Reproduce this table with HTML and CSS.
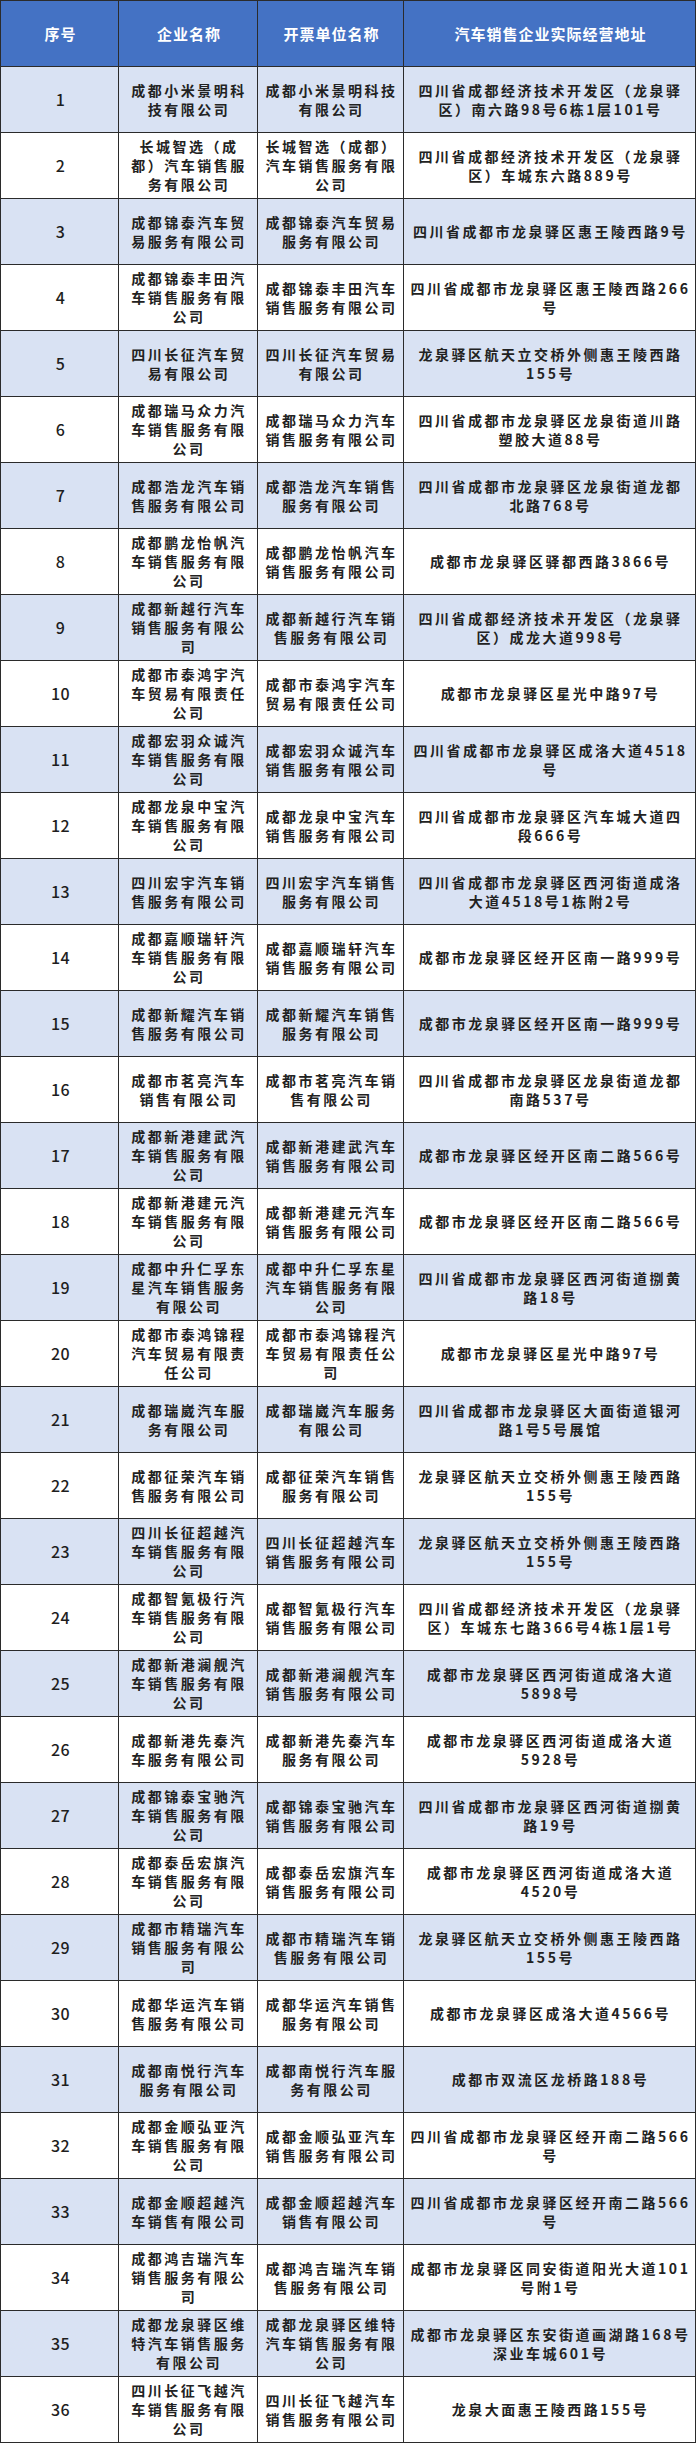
FILE: index.html
```html
<!DOCTYPE html>
<html lang="zh-CN">
<head>
<meta charset="utf-8">
<title>汽车销售企业名单</title>
<link rel="stylesheet" href="styles.css">
</head>
<body>
<div class="sheet">
  <div class="row head"><div class="cell">序号</div><div class="cell">企业名称</div><div class="cell">开票单位名称</div><div class="cell">汽车销售企业实际经营地址</div></div>
  <div class="row odd"><div class="cell num">1</div><div class="cell">成都小米景明科<br>技有限公司</div><div class="cell">成都小米景明科技<br>有限公司</div><div class="cell">四川省成都经济技术开发区（龙泉驿<br>区）南六路98号6栋1层101号</div></div>
  <div class="row"><div class="cell num">2</div><div class="cell">长城智选（成<br>都）汽车销售服<br>务有限公司</div><div class="cell">长城智选（成都）<br>汽车销售服务有限<br>公司</div><div class="cell">四川省成都经济技术开发区（龙泉驿<br>区）车城东六路889号</div></div>
  <div class="row odd"><div class="cell num">3</div><div class="cell">成都锦泰汽车贸<br>易服务有限公司</div><div class="cell">成都锦泰汽车贸易<br>服务有限公司</div><div class="cell">四川省成都市龙泉驿区惠王陵西路9号</div></div>
  <div class="row"><div class="cell num">4</div><div class="cell">成都锦泰丰田汽<br>车销售服务有限<br>公司</div><div class="cell">成都锦泰丰田汽车<br>销售服务有限公司</div><div class="cell">四川省成都市龙泉驿区惠王陵西路266<br>号</div></div>
  <div class="row odd"><div class="cell num">5</div><div class="cell">四川长征汽车贸<br>易有限公司</div><div class="cell">四川长征汽车贸易<br>有限公司</div><div class="cell">龙泉驿区航天立交桥外侧惠王陵西路<br>155号</div></div>
  <div class="row"><div class="cell num">6</div><div class="cell">成都瑞马众力汽<br>车销售服务有限<br>公司</div><div class="cell">成都瑞马众力汽车<br>销售服务有限公司</div><div class="cell">四川省成都市龙泉驿区龙泉街道川路<br>塑胶大道88号</div></div>
  <div class="row odd"><div class="cell num">7</div><div class="cell">成都浩龙汽车销<br>售服务有限公司</div><div class="cell">成都浩龙汽车销售<br>服务有限公司</div><div class="cell">四川省成都市龙泉驿区龙泉街道龙都<br>北路768号</div></div>
  <div class="row"><div class="cell num">8</div><div class="cell">成都鹏龙怡帆汽<br>车销售服务有限<br>公司</div><div class="cell">成都鹏龙怡帆汽车<br>销售服务有限公司</div><div class="cell">成都市龙泉驿区驿都西路3866号</div></div>
  <div class="row odd"><div class="cell num">9</div><div class="cell">成都新越行汽车<br>销售服务有限公<br>司</div><div class="cell">成都新越行汽车销<br>售服务有限公司</div><div class="cell">四川省成都经济技术开发区（龙泉驿<br>区）成龙大道998号</div></div>
  <div class="row"><div class="cell num">10</div><div class="cell">成都市泰鸿宇汽<br>车贸易有限责任<br>公司</div><div class="cell">成都市泰鸿宇汽车<br>贸易有限责任公司</div><div class="cell">成都市龙泉驿区星光中路97号</div></div>
  <div class="row odd"><div class="cell num">11</div><div class="cell">成都宏羽众诚汽<br>车销售服务有限<br>公司</div><div class="cell">成都宏羽众诚汽车<br>销售服务有限公司</div><div class="cell">四川省成都市龙泉驿区成洛大道4518<br>号</div></div>
  <div class="row"><div class="cell num">12</div><div class="cell">成都龙泉中宝汽<br>车销售服务有限<br>公司</div><div class="cell">成都龙泉中宝汽车<br>销售服务有限公司</div><div class="cell">四川省成都市龙泉驿区汽车城大道四<br>段666号</div></div>
  <div class="row odd"><div class="cell num">13</div><div class="cell">四川宏宇汽车销<br>售服务有限公司</div><div class="cell">四川宏宇汽车销售<br>服务有限公司</div><div class="cell">四川省成都市龙泉驿区西河街道成洛<br>大道4518号1栋附2号</div></div>
  <div class="row"><div class="cell num">14</div><div class="cell">成都嘉顺瑞轩汽<br>车销售服务有限<br>公司</div><div class="cell">成都嘉顺瑞轩汽车<br>销售服务有限公司</div><div class="cell">成都市龙泉驿区经开区南一路999号</div></div>
  <div class="row odd"><div class="cell num">15</div><div class="cell">成都新耀汽车销<br>售服务有限公司</div><div class="cell">成都新耀汽车销售<br>服务有限公司</div><div class="cell">成都市龙泉驿区经开区南一路999号</div></div>
  <div class="row"><div class="cell num">16</div><div class="cell">成都市茗亮汽车<br>销售有限公司</div><div class="cell">成都市茗亮汽车销<br>售有限公司</div><div class="cell">四川省成都市龙泉驿区龙泉街道龙都<br>南路537号</div></div>
  <div class="row odd"><div class="cell num">17</div><div class="cell">成都新港建武汽<br>车销售服务有限<br>公司</div><div class="cell">成都新港建武汽车<br>销售服务有限公司</div><div class="cell">成都市龙泉驿区经开区南二路566号</div></div>
  <div class="row"><div class="cell num">18</div><div class="cell">成都新港建元汽<br>车销售服务有限<br>公司</div><div class="cell">成都新港建元汽车<br>销售服务有限公司</div><div class="cell">成都市龙泉驿区经开区南二路566号</div></div>
  <div class="row odd"><div class="cell num">19</div><div class="cell">成都中升仁孚东<br>星汽车销售服务<br>有限公司</div><div class="cell">成都中升仁孚东星<br>汽车销售服务有限<br>公司</div><div class="cell">四川省成都市龙泉驿区西河街道捌黄<br>路18号</div></div>
  <div class="row"><div class="cell num">20</div><div class="cell">成都市泰鸿锦程<br>汽车贸易有限责<br>任公司</div><div class="cell">成都市泰鸿锦程汽<br>车贸易有限责任公<br>司</div><div class="cell">成都市龙泉驿区星光中路97号</div></div>
  <div class="row odd"><div class="cell num">21</div><div class="cell">成都瑞崴汽车服<br>务有限公司</div><div class="cell">成都瑞崴汽车服务<br>有限公司</div><div class="cell">四川省成都市龙泉驿区大面街道银河<br>路1号5号展馆</div></div>
  <div class="row"><div class="cell num">22</div><div class="cell">成都征荣汽车销<br>售服务有限公司</div><div class="cell">成都征荣汽车销售<br>服务有限公司</div><div class="cell">龙泉驿区航天立交桥外侧惠王陵西路<br>155号</div></div>
  <div class="row odd"><div class="cell num">23</div><div class="cell">四川长征超越汽<br>车销售服务有限<br>公司</div><div class="cell">四川长征超越汽车<br>销售服务有限公司</div><div class="cell">龙泉驿区航天立交桥外侧惠王陵西路<br>155号</div></div>
  <div class="row"><div class="cell num">24</div><div class="cell">成都智氪极行汽<br>车销售服务有限<br>公司</div><div class="cell">成都智氪极行汽车<br>销售服务有限公司</div><div class="cell">四川省成都经济技术开发区（龙泉驿<br>区）车城东七路366号4栋1层1号</div></div>
  <div class="row odd"><div class="cell num">25</div><div class="cell">成都新港澜舰汽<br>车销售服务有限<br>公司</div><div class="cell">成都新港澜舰汽车<br>销售服务有限公司</div><div class="cell">成都市龙泉驿区西河街道成洛大道<br>5898号</div></div>
  <div class="row"><div class="cell num">26</div><div class="cell">成都新港先秦汽<br>车服务有限公司</div><div class="cell">成都新港先秦汽车<br>服务有限公司</div><div class="cell">成都市龙泉驿区西河街道成洛大道<br>5928号</div></div>
  <div class="row odd"><div class="cell num">27</div><div class="cell">成都锦泰宝驰汽<br>车销售服务有限<br>公司</div><div class="cell">成都锦泰宝驰汽车<br>销售服务有限公司</div><div class="cell">四川省成都市龙泉驿区西河街道捌黄<br>路19号</div></div>
  <div class="row"><div class="cell num">28</div><div class="cell">成都泰岳宏旗汽<br>车销售服务有限<br>公司</div><div class="cell">成都泰岳宏旗汽车<br>销售服务有限公司</div><div class="cell">成都市龙泉驿区西河街道成洛大道<br>4520号</div></div>
  <div class="row odd"><div class="cell num">29</div><div class="cell">成都市精瑞汽车<br>销售服务有限公<br>司</div><div class="cell">成都市精瑞汽车销<br>售服务有限公司</div><div class="cell">龙泉驿区航天立交桥外侧惠王陵西路<br>155号</div></div>
  <div class="row"><div class="cell num">30</div><div class="cell">成都华运汽车销<br>售服务有限公司</div><div class="cell">成都华运汽车销售<br>服务有限公司</div><div class="cell">成都市龙泉驿区成洛大道4566号</div></div>
  <div class="row odd"><div class="cell num">31</div><div class="cell">成都南悦行汽车<br>服务有限公司</div><div class="cell">成都南悦行汽车服<br>务有限公司</div><div class="cell">成都市双流区龙桥路188号</div></div>
  <div class="row"><div class="cell num">32</div><div class="cell">成都金顺弘亚汽<br>车销售服务有限<br>公司</div><div class="cell">成都金顺弘亚汽车<br>销售服务有限公司</div><div class="cell">四川省成都市龙泉驿区经开南二路566<br>号</div></div>
  <div class="row odd"><div class="cell num">33</div><div class="cell">成都金顺超越汽<br>车销售有限公司</div><div class="cell">成都金顺超越汽车<br>销售有限公司</div><div class="cell">四川省成都市龙泉驿区经开南二路566<br>号</div></div>
  <div class="row"><div class="cell num">34</div><div class="cell">成都鸿吉瑞汽车<br>销售服务有限公<br>司</div><div class="cell">成都鸿吉瑞汽车销<br>售服务有限公司</div><div class="cell">成都市龙泉驿区同安街道阳光大道101<br>号附1号</div></div>
  <div class="row odd"><div class="cell num">35</div><div class="cell">成都龙泉驿区维<br>特汽车销售服务<br>有限公司</div><div class="cell">成都龙泉驿区维特<br>汽车销售服务有限<br>公司</div><div class="cell">成都市龙泉驿区东安街道画湖路168号<br>深业车城601号</div></div>
  <div class="row"><div class="cell num">36</div><div class="cell">四川长征飞越汽<br>车销售服务有限<br>公司</div><div class="cell">四川长征飞越汽车<br>销售服务有限公司</div><div class="cell">龙泉大面惠王陵西路155号</div></div>
</div>
</body>
</html>
```
FILE: styles.css
```css
html, body {
  margin: 0;
  padding: 0;
  background: #ffffff;
}

.sheet {
  width: 696px;
  box-sizing: border-box;
  border-top: 1px solid #2b2b2b;
  border-left: 1px solid #2b2b2b;
  font-family: "Noto Sans CJK SC", "Noto Sans", sans-serif;
  color: #222222;
}

.row {
  display: grid;
  grid-template-columns: 118px 139px 146px 292px;
  height: 66px;
  background: #ffffff;
}

.row.odd {
  background: #d9e2f3;
}

.row.head {
  background: #4472c4;
}

.cell {
  box-sizing: border-box;
  border-right: 1px solid #2b2b2b;
  border-bottom: 1px solid #2b2b2b;
  display: flex;
  align-items: center;
  justify-content: center;
  text-align: center;
  white-space: nowrap;
  font-size: 14px;
  font-weight: 700;
  line-height: 19px;
  letter-spacing: 2.5px;
  padding-left: 2px;
}

.head .cell {
  color: #ffffff;
  font-size: 15px;
  font-weight: 700;
  letter-spacing: 1px;
}

.cell.num {
  font-size: 16px;
  font-weight: 500;
  letter-spacing: 0.5px;
  color: #1e1e1e;
}
```
